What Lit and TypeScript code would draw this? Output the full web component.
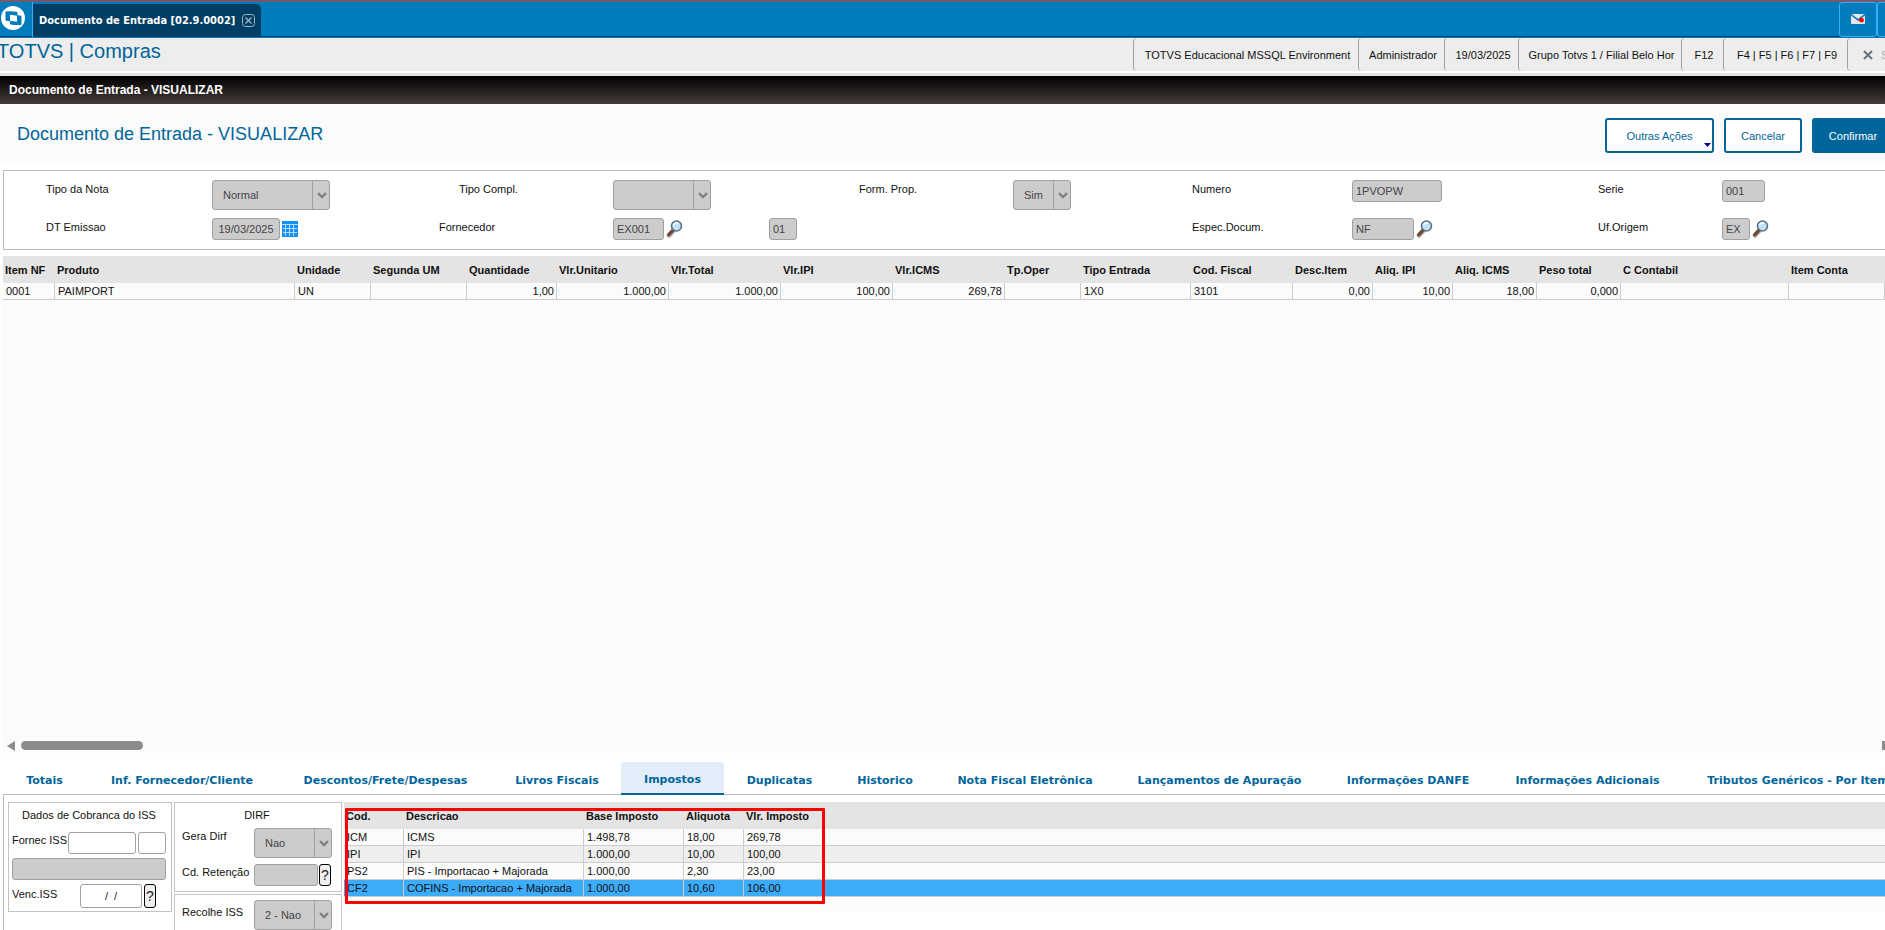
import { LitElement, html, css } from "lit";
import { customElement, property, state } from "lit/decorators.js";
import { classMap } from "lit/directives/class-map.js";

interface Column {
  title: string;
  width: number;
  value: string;
  numeric?: boolean;
}

const itemColumns: Column[] = [
  { title: "Item NF", width: 52, value: "0001" },
  { title: "Produto", width: 240, value: "PAIMPORT" },
  { title: "Unidade", width: 76, value: "UN" },
  { title: "Segunda UM", width: 96, value: "" },
  { title: "Quantidade", width: 90, value: "1,00", numeric: true },
  { title: "Vlr.Unitario", width: 112, value: "1.000,00", numeric: true },
  { title: "Vlr.Total", width: 112, value: "1.000,00", numeric: true },
  { title: "Vlr.IPI", width: 112, value: "100,00", numeric: true },
  { title: "Vlr.ICMS", width: 112, value: "269,78", numeric: true },
  { title: "Tp.Oper", width: 76, value: "" },
  { title: "Tipo Entrada", width: 110, value: "1X0" },
  { title: "Cod. Fiscal", width: 102, value: "3101" },
  { title: "Desc.Item", width: 80, value: "0,00", numeric: true },
  { title: "Aliq. IPI", width: 80, value: "10,00", numeric: true },
  { title: "Aliq. ICMS", width: 84, value: "18,00", numeric: true },
  { title: "Peso total", width: 84, value: "0,000", numeric: true },
  { title: "C Contabil", width: 168, value: "" },
  { title: "Item Conta", width: 96, value: "" },
];

const taxHeads = ["Cod.", "Descricao", "Base Imposto", "Aliquota", "Vlr. Imposto"];
const taxRows = [
  ["ICM", "ICMS", "1.498,78", "18,00", "269,78"],
  ["IPI", "IPI", "1.000,00", "10,00", "100,00"],
  ["PS2", "PIS - Importacao + Majorada", "1.000,00", "2,30", "23,00"],
  ["CF2", "COFINS - Importacao + Majorada", "1.000,00", "10,60", "106,00"],
];

const tabList: [string, number][] = [
  ["Totais", 83],
  ["Inf. Fornecedor/Cliente", 192],
  ["Descontos/Frete/Despesas", 215],
  ["Livros Fiscais", 128],
  ["Impostos", 103],
  ["Duplicatas", 111],
  ["Historico", 100],
  ["Nota Fiscal Eletrônica", 180],
  ["Lançamentos de Apuração", 209],
  ["Informações DANFE", 168],
  ["Informações Adicionais", 191],
  ["Tributos Genéricos - Por Item", 230],
];

const controlStyles = css`
  :host {
    display: block;
  }
  * {
    box-sizing: border-box;
  }
  input,
  select,
  button {
    margin: 0;
    font: 11px/16px "Liberation Sans", Arial, sans-serif;
    color: #222;
  }
`;

@customElement("combo-box")
export class ComboBox extends LitElement {
  @property() value = "";
  @property() label = "";

  static styles = [
    controlStyles,
    css`
      .combo {
        display: grid;
        height: 30px;
      }
      select,
      .arrow {
        grid-area: 1 / 1;
      }
      select {
        width: 100%;
        padding: 0 20px 0 10px;
        border: 1px solid #a0a0a0;
        border-radius: 3px;
        background: #ccc;
        color: #444;
        opacity: 1;
        appearance: none;
      }
      .arrow {
        justify-self: end;
        display: grid;
        place-items: center;
        width: 18px;
        border-left: 1px solid #a0a0a0;
        pointer-events: none;
      }
    `,
  ];

  render() {
    return html`<div class="combo">
      <select disabled aria-label=${this.label}>
        <option>${this.value}</option>
      </select>
      <span class="arrow">
        <svg width="10" height="7" viewBox="0 0 10 7" fill="none" stroke="#808080" stroke-width="2.400">
          <path d="M1 1.200l4 3.800 4-3.800" />
        </svg>
      </span>
    </div>`;
  }
}

const lens = html`<svg width="18" height="18" viewBox="0 0 18 18" aria-hidden="true">
  <path d="M3 15.500L8 10" stroke="#c9c2bd" stroke-width="5" stroke-linecap="round" />
  <path d="M2.800 14.800L7.400 10" stroke="#6d4a3a" stroke-width="3.400" stroke-linecap="round" />
  <circle cx="10.500" cy="6" r="5" fill="#bfe2f8" stroke="#5c6f80" stroke-width="1.600" />
  <path d="M7.500 5.500a3.200 3.200 0 0 1 4.500-2.300" stroke="#fff" stroke-width="1.600" fill="none" />
</svg>`;

const calendar = html`<svg width="16" height="16" viewBox="0 0 16 16" aria-hidden="true">
  <path d="M0 0h16v16H0z" fill="#1490fb" />
  <path
    d="M0 3.500h16M1 7.500h14M1 11.500h14M3.500 4v11M7.500 4v11M11.500 4v11"
    stroke="#b4dbff"
    stroke-width="1"
  />
</svg>`;

@customElement("app-root")
export class AppRoot extends LitElement {
  @state() private active = "Impostos";

  static styles = [
    controlStyles,
    css`
      :host {
        height: 100vh;
        overflow: hidden;
        font: 11px/16px "Liberation Sans", Arial, sans-serif;
        color: #111;
        background: #fff;
      }
      .app {
        display: flex;
        flex-direction: column;
        height: 100%;
      }
      .app > * {
        flex: none;
      }
      .windows {
        display: flex;
        height: 38px;
        border-top: 2px solid #76596c;
        border-bottom: 1px solid #007bbb;
        background: #007bbb;
        box-shadow: inset 0 -1px #003e63;
      }
      .brand {
        width: 33px;
        padding: 4px 0 0 1px;
        border-right: 1px solid #3cabf9;
      }
      .brand svg,
      .window-tab svg {
        display: block;
      }
      .window-tab {
        display: flex;
        align-items: center;
        gap: 7px;
        margin-top: 2px;
        padding: 0 6px;
        border-radius: 0 5px 0 0;
        background: #003e63;
        color: #fff;
        font: bold 11px/16px "DejaVu Sans Condensed", "DejaVu Sans", sans-serif;
        font-stretch: condensed;
      }
      .close {
        padding: 0;
        border: 0;
        background: none;
      }
      .mail {
        width: 38px;
        margin-left: auto;
        padding: 0 10px 0 9px;
        border: 1px solid #3cabf9;
        border-radius: 3px;
        background: none;
      }
      .extra {
        width: 8px;
        border: 1px solid #3cabf9;
        border-right: 0;
        border-radius: 3px 0 0 3px;
      }
      .module {
        display: flex;
        height: 38px;
        border-bottom: 3px solid #e4e4e4;
        background: linear-gradient(#ededed 33px, #fff 33px);
      }
      .module h1 {
        margin: 0 auto 0 -3px;
        font: 20px/26px "Liberation Sans", Arial, sans-serif;
        color: #00659a;
      }
      .status {
        display: flex;
        height: 33px;
        white-space: nowrap;
      }
      .status span,
      .leave {
        display: grid;
        place-items: center;
        border: 0;
        border-left: 1px solid #a0a0a0;
        border-radius: 4px;
      }
      .status span {
        padding-left: 3px;
      }
      .leave {
        grid-auto-flow: column;
        justify-content: start;
        gap: 8px;
        width: 38px;
        padding: 0 0 0 15px;
        background: none;
        color: #aaa;
        overflow: hidden;
      }
      .routine {
        padding: 6px 9px;
        background: linear-gradient(#000, #443d3a);
        color: #fff;
        font: bold 12px/16px "Liberation Sans", Arial, sans-serif;
      }
      .heading {
        display: flex;
        align-items: center;
        justify-content: space-between;
        height: 60px;
        padding-left: 17px;
        background: #fbfbfb;
      }
      .heading h2 {
        margin: 0;
        font: 18px/24px "Liberation Sans", Arial, sans-serif;
        color: #00659a;
      }
      .actions {
        display: flex;
        gap: 10px;
        margin: 3px -9px 0 0;
      }
      .actions button {
        position: relative;
        width: 78px;
        height: 35px;
        padding: 0;
        border: 2px solid #00659a;
        border-radius: 3px;
        background: #fff;
        color: #00659a;
      }
      .actions .wide {
        width: 109px;
      }
      .actions .primary {
        width: 82px;
        background: #00659a;
        color: #fff;
      }
      .actions svg {
        position: absolute;
        right: 1px;
        bottom: 4px;
      }
      .fields {
        display: grid;
        grid-template-columns: 166fr 227fr 174fr 246fr 154fr 179fr 160fr 246fr 124fr 163fr;
        grid-template-rows: 30px 22px;
        row-gap: 8px;
        margin: 6px 0 0 3px;
        padding: 9px 0 9px 42px;
        border: 1px solid #bbb;
        border-right: 0;
        line-height: 18px;
      }
      .indent {
        padding-left: 20px;
      }
      .control {
        display: flex;
        gap: 2px;
        align-items: flex-start;
        min-width: 0;
      }
      .second {
        margin-left: 83px;
      }
      .lookup {
        display: grid;
        place-items: center;
        height: 22px;
        padding: 0;
        border: 0;
        background: none;
      }
      input {
        height: 22px;
        min-width: 0;
        padding: 0 3px;
        border: 1px solid #a0a0a0;
        border-radius: 3px;
        background: #fff;
      }
      input[readonly] {
        background: #ccc;
        color: #444;
      }
      .w28 {
        width: 28px;
      }
      .w43 {
        width: 43px;
      }
      .w51 {
        width: 51px;
      }
      .w58 {
        width: 58px;
      }
      .w62 {
        width: 62px;
      }
      .w68 {
        width: 68px;
      }
      .w78 {
        width: 78px;
      }
      .w90 {
        width: 90px;
      }
      .w98 {
        width: 98px;
      }
      .w118 {
        width: 118px;
      }
      .center {
        text-align: center;
      }
      table {
        width: 100%;
        border-collapse: separate;
        border-spacing: 0;
        table-layout: fixed;
      }
      th {
        height: 27px;
        padding: 0 2px;
        background: #e4e4e4;
        text-align: left;
        white-space: nowrap;
      }
      td {
        height: 17px;
        padding: 0 2px 0 3px;
        border-right: 1px solid #ccc;
        border-bottom: 1px solid #ccc;
        line-height: 16px;
        white-space: nowrap;
      }
      .numeric {
        text-align: right;
      }
      .app > .items {
        display: flex;
        flex: 1;
        flex-direction: column;
        justify-content: space-between;
        min-height: 60px;
        margin: 6px 0 0 3px;
        background: #fbfbfb;
      }
      .scroll {
        display: flex;
        align-items: center;
        gap: 6px;
        height: 15px;
        padding-left: 4px;
        background: #fcfcfc;
      }
      .thumb {
        width: 122px;
        height: 9px;
        border-radius: 5px;
        background: #8b8b8b;
      }
      .scroll-end {
        width: 3px;
        height: 9px;
        margin-left: auto;
        background: #8b8b8b;
      }
      .tabs {
        display: flex;
        height: 42px;
        margin-left: 3px;
        padding-top: 9px;
        border-bottom: 1px solid #bbb;
      }
      .tab {
        flex: none;
        height: 33px;
        padding: 5px 0 0;
        border: 0;
        border-radius: 4px 4px 0 0;
        background: none;
        color: #00659a;
        font: bold 11px/16px "DejaVu Sans", Verdana, sans-serif;
        white-space: nowrap;
      }
      .tab.active {
        border-bottom: 2px solid #00659a;
        background: #e2edf9;
      }
      .panel {
        display: grid;
        grid-template-columns: 164px 168px 1fr;
        column-gap: 2px;
        margin-left: 3px;
        padding: 7px 0 0 4px;
        border-left: 1px solid #bbb;
      }
      fieldset {
        display: grid;
        align-content: start;
        min-width: 0;
        margin: 0;
        padding: 4px 5px 0 3px;
        border: 1px solid #c4c4c4;
      }
      .caption {
        text-align: center;
      }
      .iss {
        align-self: start;
        row-gap: 4px;
        padding-bottom: 3px;
      }
      .iss .caption {
        padding-bottom: 5px;
      }
      .line {
        display: grid;
        grid-template-columns: 54px 68px 28px;
        justify-content: space-between;
        white-space: nowrap;
      }
      .due {
        display: flex;
        gap: 2px;
      }
      .due label {
        width: 66px;
        padding-top: 2px;
      }
      .due .help,
      .due input {
        height: 24px;
      }
      .help {
        width: 12px;
        padding: 0;
        border: 1px solid #000;
        border-radius: 3px;
        background: #efefef;
        font-size: 14px;
      }
      .dirf-column {
        display: grid;
        row-gap: 2px;
      }
      .pair {
        display: grid;
        grid-template-columns: 72px 1fr;
        padding-left: 4px;
      }
      .pair .control {
        gap: 1px;
      }
      .pair .control input {
        width: 64px;
      }
      .pair .help {
        height: 22px;
      }
      .dirf {
        height: 90px;
        row-gap: 6px;
      }
      .dirf .caption {
        margin-bottom: -1px;
      }
      .collect {
        padding-top: 5px;
        border-bottom: 0;
      }
      .collect .label {
        padding-top: 4px;
      }
      .taxes {
        position: relative;
        align-self: start;
        padding-bottom: 15px;
        background: #fbfbfb;
      }
      .taxes .c1,
      .taxes .c4 {
        width: 60px;
      }
      .taxes .c2 {
        width: 180px;
      }
      .taxes .c3 {
        width: 100px;
      }
      .taxes .c5 {
        width: 80px;
      }
      .even td {
        background: #eee;
      }
      .selected td {
        background: #3cabf9;
      }
      .taxes td:nth-last-child(-n + 2) {
        border-right: 0;
      }
      .highlight {
        position: absolute;
        top: 6px;
        left: 1px;
        width: 480px;
        height: 96px;
        border: 3px solid #f00;
        border-radius: 1px;
        pointer-events: none;
      }
    `,
  ];

  private lookup(name: string, icon = lens) {
    return html`<button class="lookup" aria-label=${name}>${icon}</button>`;
  }

  private windowBar() {
    return html`<header class="windows">
      <div class="brand">
        <svg width="24" height="24" viewBox="0 0 24 24">
          <circle cx="12" cy="12" r="12" fill="#fff" />
          <path
            d="M4.500 5.500q6-.8 12 .6v3.200q2.500 0 4 .5v9q-5.500.8-11.500-.6v-2.900q-2.600 0-4.500-.8z"
            fill="#007bbb"
          />
          <path d="M9 8.800l7 .9v6l-7-.9z" fill="#fff" />
        </svg>
      </div>
      <div class="window-tab">
        <span>Documento de Entrada [02.9.0002]</span>
        <button class="close" aria-label="Fechar">
          <svg width="13" height="13" viewBox="0 0 13 13" fill="none" stroke="#a3b8c6">
            <rect x=".5" y=".5" width="12" height="12" rx="3" />
            <path d="M3.500 3.500l6 6m0-6l-6 6" stroke-width="1.300" />
          </svg>
        </button>
      </div>
      <button class="mail" aria-label="Mensagens">
        <svg width="14" height="10" viewBox="0 0 14 10">
          <rect width="14" height="10" rx="1" fill="#e3e8ec" />
          <path d="M0 .5l7 5.500L14 .5" fill="none" stroke="#1579b5" stroke-width="1.600" />
          <circle cx="10.500" cy="6.200" r="2.400" fill="#f00" />
        </svg>
      </button>
      <div class="extra"></div>
    </header>`;
  }

  private moduleBar() {
    const cells: [string, number][] = [
      ["TOTVS Educacional MSSQL Environment", 225],
      ["Administrador", 86],
      ["19/03/2025", 74],
      ["Grupo Totvs 1 / Filial Belo Hor", 163],
      ["F12", 42],
      ["F4 | F5 | F6 | F7 | F9", 124],
    ];
    return html`<div class="module">
      <h1>TOTVS | Compras</h1>
      <div class="status">
        ${cells.map(([text, width]) => html`<span style="width:${width}px">${text}</span>`)}
        <button class="leave">
          <svg width="10" height="10" viewBox="0 0 10 10" stroke="#68727e" stroke-width="2">
            <path d="M1 1l8 8M9 1l-8 8" />
          </svg>
          Sair
        </button>
      </div>
    </div>`;
  }

  private fields() {
    return html`<section class="fields">
      <span>Tipo da Nota</span>
      <combo-box class="w118" label="Tipo da Nota" value="Normal"></combo-box>
      <span class="indent">Tipo Compl.</span>
      <combo-box class="w98" label="Tipo Compl."></combo-box>
      <span>Form. Prop.</span>
      <combo-box class="w58" label="Form. Prop." value="Sim"></combo-box>
      <label for="numero">Numero</label>
      <div class="control"><input id="numero" class="w90" readonly value="1PVOPW" /></div>
      <label for="serie">Serie</label>
      <div class="control"><input id="serie" class="w43" readonly value="001" /></div>

      <label for="emissao">DT Emissao</label>
      <div class="control">
        <input id="emissao" class="w68 center" readonly value="19/03/2025" />
        ${this.lookup("Calendário", calendar)}
      </div>
      <label for="fornecedor">Fornecedor</label>
      <div class="control">
        <input id="fornecedor" class="w51" readonly value="EX001" />
        ${this.lookup("Pesquisar fornecedor")}
        <input class="w28 second" aria-label="Loja" readonly value="01" />
      </div>
      <span></span>
      <span></span>
      <label for="especie">Espec.Docum.</label>
      <div class="control">
        <input id="especie" class="w62" readonly value="NF" />
        ${this.lookup("Pesquisar espécie")}
      </div>
      <label for="uf">Uf.Origem</label>
      <div class="control">
        <input id="uf" class="w28" readonly value="EX" />
        ${this.lookup("Pesquisar UF")}
      </div>
    </section>`;
  }

  private items() {
    return html`<section class="items">
      <table>
        <colgroup>
          ${itemColumns.map((c) => html`<col style="width:${c.width}px" />`)}
        </colgroup>
        <thead>
          <tr>
            ${itemColumns.map((c) => html`<th>${c.title}</th>`)}
          </tr>
        </thead>
        <tbody>
          <tr>
            ${itemColumns.map(
              (c) => html`<td class=${classMap({ numeric: !!c.numeric })}>${c.value}</td>`
            )}
          </tr>
        </tbody>
      </table>
      <div class="scroll">
        <svg width="8" height="10" viewBox="0 0 8 10"><path d="M8 0v10L0 5z" fill="#8b8b8b" /></svg>
        <div class="thumb"></div>
        <div class="scroll-end"></div>
      </div>
    </section>`;
  }

  private taxTable() {
    return html`<div class="taxes">
      <table>
        <colgroup>
          <col class="c1" /><col class="c2" /><col class="c3" /><col class="c4" /><col class="c5" /><col />
        </colgroup>
        <thead>
          <tr>
            ${taxHeads.map((t) => html`<th>${t}</th>`)}
            <th></th>
          </tr>
        </thead>
        <tbody>
          ${taxRows.map(
            (row, i) => html`<tr class=${classMap({ even: i === 1, selected: i === 3 })}>
              ${row.map((cell) => html`<td>${cell}</td>`)}
              <td></td>
            </tr>`
          )}
        </tbody>
      </table>
      <div class="highlight"></div>
    </div>`;
  }

  render() {
    return html`<div class="app">
      ${this.windowBar()} ${this.moduleBar()}
      <div class="routine">Documento de Entrada - VISUALIZAR</div>
      <div class="heading">
        <h2>Documento de Entrada - VISUALIZAR</h2>
        <div class="actions">
          <button class="wide">
            Outras Ações
            <svg width="7" height="4" viewBox="0 0 7 4"><path d="M0 0h7L3.500 4z" fill="#00009c" /></svg>
          </button>
          <button>Cancelar</button>
          <button class="primary">Confirmar</button>
        </div>
      </div>
      ${this.fields()} ${this.items()}
      <nav class="tabs">
        ${tabList.map(
          ([name, width]) => html`<button
            class=${classMap({ tab: true, active: name === this.active })}
            style="width:${width}px"
            @click=${() => (this.active = name)}
          >
            ${name}
          </button>`
        )}
      </nav>
      <section class="panel">
        <fieldset class="iss">
          <div class="caption">Dados de Cobranca do ISS</div>
          <div class="line">
            <label for="iss">Fornec ISS</label>
            <input id="iss" />
            <input aria-label="Loja ISS" />
          </div>
          <input aria-label="Nome do fornecedor ISS" readonly />
          <div class="due">
            <label for="venc">Venc.ISS</label>
            <input id="venc" class="w62 center" value="/  /" />
            <button class="help" aria-label="Ajuda vencimento">?</button>
          </div>
        </fieldset>
        <div class="dirf-column">
          <fieldset class="dirf">
            <div class="caption">DIRF</div>
            <div class="pair">
              <span>Gera Dirf</span>
              <combo-box class="w78" label="Gera Dirf" value="Nao"></combo-box>
            </div>
            <div class="pair">
              <label for="retencao">Cd. Retenção</label>
              <div class="control">
                <input id="retencao" readonly />
                <button class="help" aria-label="Ajuda retenção">?</button>
              </div>
            </div>
          </fieldset>
          <fieldset class="collect">
            <div class="pair">
              <span class="label">Recolhe ISS</span>
              <combo-box class="w78" label="Recolhe ISS" value="2 - Nao"></combo-box>
            </div>
          </fieldset>
        </div>
        ${this.taxTable()}
      </section>
    </div>`;
  }
}
